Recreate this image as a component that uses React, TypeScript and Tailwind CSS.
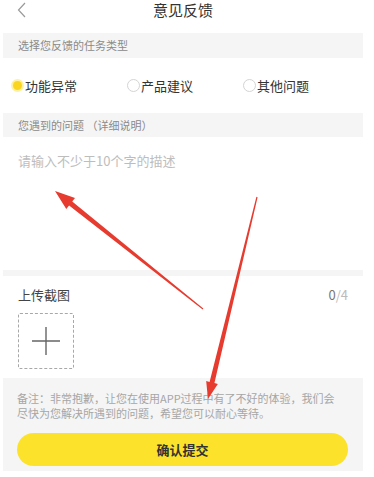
import React from "react";

type Pt = [number, number];

// tapered red annotation arrow: thin tail, thicker neck, triangular head
function arrowPoints(tail: Pt, tip: Pt, tailW: number, neckW: number, headLen: number, headW: number) {
  const dx = tip[0] - tail[0];
  const dy = tip[1] - tail[1];
  const len = Math.hypot(dx, dy);
  const ux = dx / len;
  const uy = dy / len;
  const nx = -uy;
  const ny = ux;
  const neck: Pt = [tip[0] - ux * headLen, tip[1] - uy * headLen];
  const p = (b: Pt, w: number): string => `${b[0] + nx * w},${b[1] + ny * w}`;
  return [
    p(tail, tailW / 2),
    p(neck, neckW / 2),
    p(neck, headW / 2),
    `${tip[0]},${tip[1]}`,
    p(neck, -headW / 2),
    p(neck, -neckW / 2),
    p(tail, -tailW / 2),
  ].join(" ");
}

function Radio({ label, checked }: { label: string; checked?: boolean }) {
  return (
    <div className="flex items-center">
      {checked ? (
        <span className="flex h-[13px] w-[13px] items-center justify-center rounded-full bg-[#fdf1a6]">
          <span className="h-[9px] w-[9px] rounded-full bg-[#fad51f]" />
        </span>
      ) : (
        <span className="h-[13px] w-[13px] rounded-full border border-[#d4d4d4]" />
      )}
      <span className="ml-px text-[13px] leading-[18px] text-[#333]">{label}</span>
    </div>
  );
}

export default function App() {
  return (
    <div
      className="relative h-[477px] w-[374px] overflow-hidden bg-white"
      style={{ fontFamily: '"Noto Sans CJK SC", "Noto Sans", sans-serif' }}
    >
      <div className="ml-[3px] w-[360px]">
        {/* nav */}
        <div className="relative flex h-[33px] justify-center">
          <svg className="absolute left-[14px] top-[2px]" width="10" height="16" viewBox="0 0 10 16">
            <polyline points="8,1 1.5,8 8,15" fill="none" stroke="#9a9a9a" strokeWidth="1.2" />
          </svg>
          <span className="text-[15px] leading-[20px] text-[#333]">意见反馈</span>
        </div>

        <div className="flex h-[25px] items-center bg-[#f5f5f5] pl-[15px] text-[11px] text-[#8a8a8a]">
          选择您反馈的任务类型
        </div>

        <div className="flex h-[55px] items-center pl-[8px]">
          <div className="w-[116px]">
            <Radio label="功能异常" checked />
          </div>
          <div className="w-[116px]">
            <Radio label="产品建议" />
          </div>
          <Radio label="其他问题" />
        </div>

        <div className="flex h-[24px] items-center bg-[#f5f5f5] pl-[15px] text-[11px] text-[#8a8a8a]">
          您遇到的问题 （详细说明）
        </div>

        <div className="h-[133px] pl-[15px] pt-[15px] text-[13px] leading-[17px] text-[#bdbdbd]">
          请输入不少于10个字的描述
        </div>

        <div className="h-[6px] bg-[#f5f5f5]" />

        {/* upload */}
        <div className="h-[102px] px-[15px] pt-[10px]">
          <div className="flex items-center justify-between text-[13px] leading-[18px]">
            <span className="text-[#444]">上传截图</span>
            <span>
              <span className="text-[#777]">0</span>
              <span className="text-[#bbb]">/4</span>
            </span>
          </div>
          <div className="mt-[9px] flex h-[56px] w-[56px] items-center justify-center rounded-[2px] border border-dashed border-[#a8a8a8]">
            <svg width="28" height="28" viewBox="0 0 28 28">
              <path d="M14 0v28M0 14h28" stroke="#666" strokeWidth="1.4" />
            </svg>
          </div>
        </div>

        {/* note + submit */}
        <div className="h-[93px] bg-[#f5f5f5] px-[14px] pt-[13px]">
          <p className="w-[326px] text-[11px] leading-[15px] text-[#a6a6a6]">
            备注：非常抱歉，让您在使用APP过程中有了不好的体验，我们会尽快为您解决所遇到的问题，希望您可以耐心等待。
          </p>
          <button className="mt-[12px] flex h-[33px] w-[331px] items-center justify-center rounded-full bg-[#fce22b] text-[13px] font-bold text-[#333]">
            确认提交
          </button>
        </div>
      </div>

      <svg className="pointer-events-none absolute inset-0" width="374" height="477">
        <polygon points={arrowPoints([203, 309], [55, 191], 1, 5, 20, 14)} fill="#e63b2e" />
        <polygon points={arrowPoints([257, 197], [208, 399], 1.2, 5, 17, 12)} fill="#e63b2e" />
      </svg>
    </div>
  );
}
